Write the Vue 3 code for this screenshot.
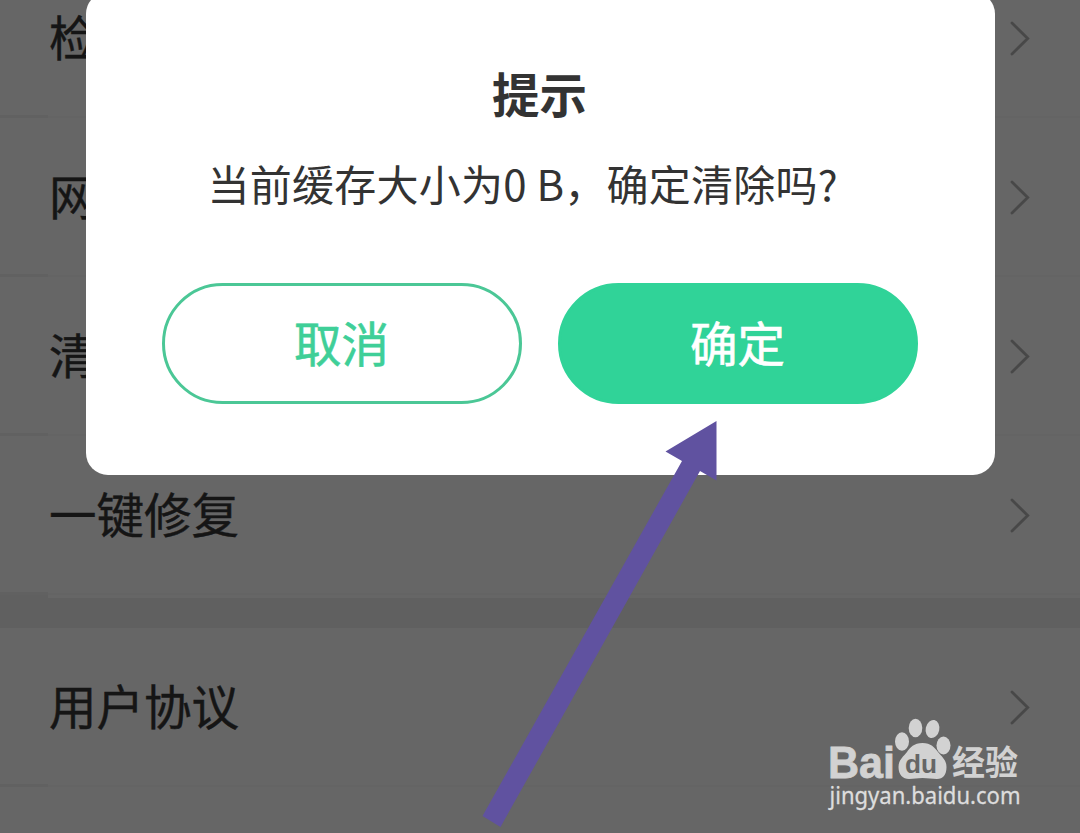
<script setup>
import { ref } from 'vue'

const groups = ref([
  {
    id: 1,
    items: [
      { id: 11, label: '检' },
      { id: 12, label: '网' },
      { id: 13, label: '清' },
      { id: 14, label: '一键修复' }
    ]
  },
  {
    id: 2,
    items: [{ id: 21, label: '用户协议' }]
  }
])

const showDialog = ref(true)

const closeDialog = () => {
  showDialog.value = false
}
</script>

<template>
  <div class="settings-page">
    <div v-for="group in groups" :key="group.id" class="settings-group">
      <div v-for="item in group.items" :key="item.id" class="settings-row">
        <span class="row-label">{{ item.label }}</span>
        <svg class="row-arrow" viewBox="0 0 20 36">
          <path d="M2 2 L17.7 17.5 L2 33" />
        </svg>
      </div>
    </div>

    <div v-if="showDialog" class="dialog-layer">
      <div class="dialog">
        <h2 class="dialog-title">提示</h2>
        <p class="dialog-message">当前缓存大小为0 B，确定清除吗?</p>
        <div class="dialog-actions">
          <button class="dialog-btn cancel" @click="closeDialog">取消</button>
          <button class="dialog-btn confirm" @click="closeDialog">确定</button>
        </div>
      </div>
    </div>

    <svg class="pointer" viewBox="0 0 1080 833">
      <polygon points="716.5,421 665.5,451.5 682,461 482.5,816 500.5,827 700,471 716.5,480.5" />
    </svg>

    <svg class="watermark" viewBox="810 700 230 133">
      <text class="logo-text" x="828" y="777.5" textLength="67" lengthAdjust="spacingAndGlyphs">Bai</text>
      <ellipse cx="902" cy="741.5" rx="7" ry="9.3" />
      <ellipse cx="915.5" cy="728" rx="6.8" ry="9.2" />
      <ellipse cx="932.5" cy="729" rx="6.8" ry="9.2" transform="rotate(12 932.5 729)" />
      <ellipse cx="943.5" cy="745.5" rx="7" ry="9" />
      <path d="M922.5 743 C914 743 910 747.5 907 752 C903 757 898.5 760 898.5 767 C898.5 775 903 779 909 779 C914 779 917 778 922.5 778 C928 778 932 779 937 779 C943 779 946.5 775 946.5 767 C946.5 760 942 757 938 752 C934.5 747.5 931 743 922.5 743 Z" />
      <text class="logo-du" x="905" y="773" textLength="32" lengthAdjust="spacingAndGlyphs">du</text>
      <text class="logo-cn" x="952" y="775" textLength="66" lengthAdjust="spacingAndGlyphs">经验</text>
      <text class="logo-url" x="829.5" y="803.5" textLength="191" lengthAdjust="spacingAndGlyphs">jingyan.baidu.com</text>
    </svg>
  </div>
</template>

<style>
body {
  margin: 0;
  overflow: hidden;
}
</style>

<style scoped>
.settings-page {
  position: relative;
  width: 100%;
  height: 833px;
  overflow: hidden;
  background: #666666;
  font-family: "Noto Sans CJK SC", sans-serif;
}

.settings-group {
  display: flex;
  flex-direction: column;
}

.settings-group:first-child {
  margin-top: -41px;
  padding-bottom: 3px;
  border-bottom: 30px solid #606060;
  background: linear-gradient(#606060, #606060) left bottom / 48px 3px no-repeat;
}

.settings-row {
  box-sizing: border-box;
  display: flex;
  justify-content: space-between;
  align-items: center;
  height: 159px;
  padding: 0 50px 0 49px;
  background:
    linear-gradient(#616161, #616161) left bottom / 48px 3px no-repeat,
    linear-gradient(#646464, #646464) left bottom / 100% 2px no-repeat;
}

.row-label {
  padding-bottom: 6px;
  font-size: 47.5px;
  line-height: 64px;
  color: #151515;
  -webkit-text-stroke: 0.4px #151515;
}

.row-arrow {
  width: 20px;
  height: 36px;
  fill: none;
  stroke: #484848;
  stroke-width: 2.8;
  stroke-linecap: round;
  stroke-linejoin: miter;
}

.dialog-layer {
  position: absolute;
  inset: 0;
  display: flex;
  justify-content: center;
  align-items: flex-start;
}

.dialog {
  box-sizing: border-box;
  width: 909px;
  height: 483px;
  margin-top: -8px;
  padding: 66px 77px 0 76px;
  border-radius: 22px;
  background: #ffffff;
}

.dialog-title {
  margin: 0;
  font-size: 47.5px;
  line-height: 70px;
  font-weight: 700;
  text-align: center;
  color: #333333;
}

.dialog-message {
  margin: 25px 0 0;
  padding-left: 46px;
  font-size: 42px;
  line-height: 60px;
  letter-spacing: 0.25px;
  white-space: nowrap;
  color: #333333;
}

.dialog-actions {
  display: flex;
  justify-content: space-between;
  margin-top: 70px;
}

.dialog-btn {
  box-sizing: border-box;
  width: 360px;
  height: 121px;
  padding: 0 0 3px;
  border: 3px solid #30d398;
  border-radius: 61px;
  font-family: inherit;
  font-size: 47.5px;
  font-weight: 400;
  line-height: 64px;
  cursor: pointer;
}

.dialog-btn.cancel {
  background: #ffffff;
  color: #3fcf98;
  border-color: #4bc796;
  -webkit-text-stroke: 0.6px #3fcf98;
}

.dialog-btn.confirm {
  background: #30d398;
  color: #ffffff;
  -webkit-text-stroke: 0.6px #ffffff;
}

.pointer {
  position: absolute;
  top: 0;
  left: 0;
  width: 1080px;
  height: 833px;
  fill: #6052a0;
  pointer-events: none;
}

.watermark {
  position: absolute;
  left: 810px;
  top: 700px;
  width: 230px;
  height: 133px;
  fill: #d2d2d2;
  pointer-events: none;
}

.logo-text {
  font-family: "Liberation Sans", sans-serif;
  font-size: 44px;
  font-weight: 700;
  stroke: #d2d2d2;
  stroke-width: 0.8px;
}

.logo-du {
  font-family: "Liberation Sans", sans-serif;
  font-size: 26px;
  font-weight: 700;
  fill: #666666;
}

.logo-cn {
  font-family: "Noto Sans CJK SC", sans-serif;
  font-size: 34px;
  font-weight: 700;
}

.logo-url {
  font-family: "Noto Sans", sans-serif;
  font-size: 23px;
  fill: #dddddd;
  stroke: #dddddd;
  stroke-width: 0.3px;
}
</style>
